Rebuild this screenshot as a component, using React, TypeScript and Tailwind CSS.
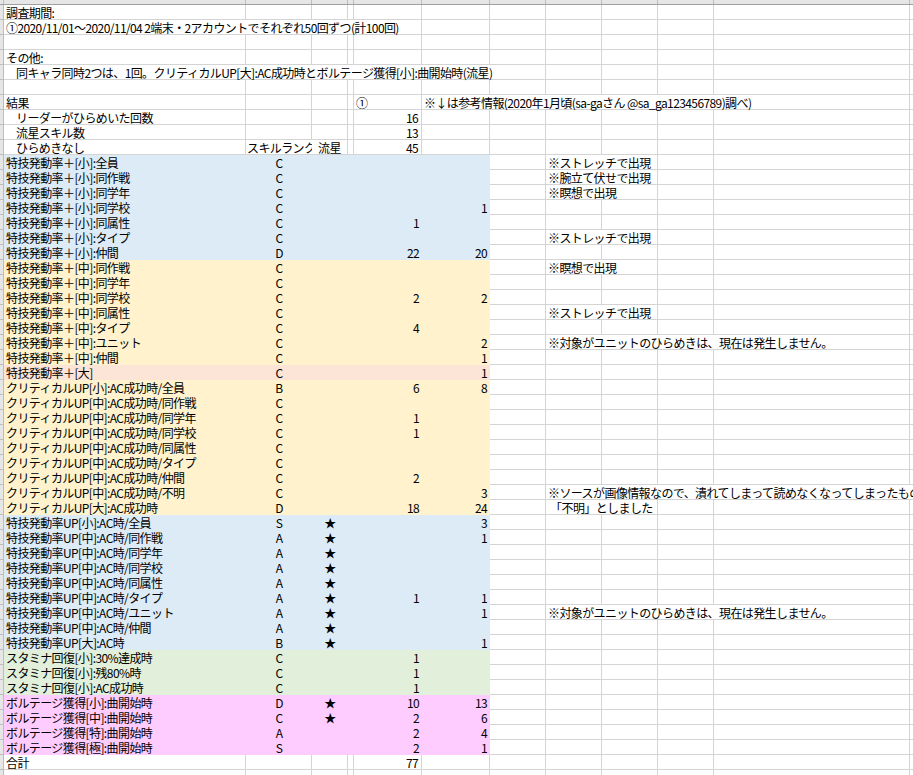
import React from "react";

const W = [4, 242, 66, 36, 6, 68, 68, 56, 56, 56, 56, 196, 9];
const BLUE = "bg-[#ddebf7]", OR = "bg-[#fff2cc]", RED = "bg-[#fce4d6]", GR = "bg-[#e2efda]", PK = "bg-[#ffccff]";

type R = { a?: string; ind?: boolean; b?: string; c?: string; e?: string; f?: string; fl?: boolean; h?: string; col?: string };

const U = "ひらめき";
const rows: R[] = [
  { a: "調査期間:" },
  { a: "①2020/11/01～2020/11/04 2端末・2アカウントでそれぞれ50回ずつ(計100回)" },
  {},
  { a: "その他:" },
  { a: "同キャラ同時2つは、1回。クリティカルUP[大]:AC成功時とボルテージ獲得[小]:曲開始時(流星)", ind: true },
  {},
  { a: "結果", e: "①", fl: true, f: "※↓は参考情報(2020年1月頃(sa-gaさん @sa_ga123456789)調べ)" },
  { a: "リーダーがひらめいた回数", ind: true, e: "16" },
  { a: "流星スキル数", ind: true, e: "13" },
  { a: U + "なし", ind: true, b: "スキルランク", c: "流星", e: "45" },
  { a: "特技発動率＋[小]:全員", b: "C", col: BLUE, h: "※ストレッチで出現" },
  { a: "特技発動率＋[小]:同作戦", b: "C", col: BLUE, h: "※腕立て伏せで出現" },
  { a: "特技発動率＋[小]:同学年", b: "C", col: BLUE, h: "※瞑想で出現" },
  { a: "特技発動率＋[小]:同学校", b: "C", col: BLUE, f: "1" },
  { a: "特技発動率＋[小]:同属性", b: "C", col: BLUE, e: "1" },
  { a: "特技発動率＋[小]:タイプ", b: "C", col: BLUE, h: "※ストレッチで出現" },
  { a: "特技発動率＋[小]:仲間", b: "D", col: BLUE, e: "22", f: "20" },
  { a: "特技発動率＋[中]:同作戦", b: "C", col: OR, h: "※瞑想で出現" },
  { a: "特技発動率＋[中]:同学年", b: "C", col: OR },
  { a: "特技発動率＋[中]:同学校", b: "C", col: OR, e: "2", f: "2" },
  { a: "特技発動率＋[中]:同属性", b: "C", col: OR, h: "※ストレッチで出現" },
  { a: "特技発動率＋[中]:タイプ", b: "C", col: OR, e: "4" },
  { a: "特技発動率＋[中]:ユニット", b: "C", col: OR, f: "2", h: "※対象がユニットの" + U + "は、現在は発生しません。" },
  { a: "特技発動率＋[中]:仲間", b: "C", col: OR, f: "1" },
  { a: "特技発動率＋[大]", b: "C", col: RED, f: "1" },
  { a: "クリティカルUP[小]:AC成功時/全員", b: "B", col: OR, e: "6", f: "8" },
  { a: "クリティカルUP[中]:AC成功時/同作戦", b: "C", col: OR },
  { a: "クリティカルUP[中]:AC成功時/同学年", b: "C", col: OR, e: "1" },
  { a: "クリティカルUP[中]:AC成功時/同学校", b: "C", col: OR, e: "1" },
  { a: "クリティカルUP[中]:AC成功時/同属性", b: "C", col: OR },
  { a: "クリティカルUP[中]:AC成功時/タイプ", b: "C", col: OR },
  { a: "クリティカルUP[中]:AC成功時/仲間", b: "C", col: OR, e: "2" },
  { a: "クリティカルUP[中]:AC成功時/不明", b: "C", col: OR, f: "3", h: "※ソースが画像情報なので、潰れてしまって読めなくなってしまったものを" },
  { a: "クリティカルUP[大]:AC成功時", b: "D", col: OR, e: "18", f: "24", h: "\u00a0「不明」としました" },
  { a: "特技発動率UP[小]:AC時/全員", b: "S", c: "★", col: BLUE, f: "3" },
  { a: "特技発動率UP[中]:AC時/同作戦", b: "A", c: "★", col: BLUE, f: "1" },
  { a: "特技発動率UP[中]:AC時/同学年", b: "A", c: "★", col: BLUE },
  { a: "特技発動率UP[中]:AC時/同学校", b: "A", c: "★", col: BLUE },
  { a: "特技発動率UP[中]:AC時/同属性", b: "A", c: "★", col: BLUE },
  { a: "特技発動率UP[中]:AC時/タイプ", b: "A", c: "★", col: BLUE, e: "1", f: "1" },
  { a: "特技発動率UP[中]:AC時/ユニット", b: "A", c: "★", col: BLUE, f: "1", h: "※対象がユニットの" + U + "は、現在は発生しません。" },
  { a: "特技発動率UP[中]:AC時/仲間", b: "A", c: "★", col: BLUE },
  { a: "特技発動率UP[大]:AC時", b: "B", c: "★", col: BLUE, f: "1" },
  { a: "スタミナ回復[小]:30%達成時", b: "C", col: GR, e: "1" },
  { a: "スタミナ回復[小]:残80%時", b: "C", col: GR, e: "1" },
  { a: "スタミナ回復[小]:AC成功時", b: "C", col: GR, e: "1" },
  { a: "ボルテージ獲得[小]:曲開始時", b: "D", c: "★", col: PK, e: "10", f: "13" },
  { a: "ボルテージ獲得[中]:曲開始時", b: "C", c: "★", col: PK, e: "2", f: "6" },
  { a: "ボルテージ獲得[特]:曲開始時", b: "A", col: PK, e: "2", f: "4" },
  { a: "ボルテージ獲得[極]:曲開始時", b: "S", col: PK, e: "2", f: "1" },
  { a: "合計", e: "77" },
  {},
];

function Row({ r }: { r: R }) {
  const colored = !!r.col;
  const cell = (i: number, content: React.ReactNode, cls = "") => (
    <div
      key={i}
      style={{ width: W[i] }}
      className={`relative shrink-0 h-[15px] ${colored && i >= 1 && i <= 6 ? r.col : "border-r border-b border-[#d4d4d4]"} ${cls}`}
    >
      {content}
    </div>
  );
  const over = (t?: string, pl = "pl-[2px]") =>
    t ? <span className={`absolute left-0 top-0 z-10 h-[14px] ${pl} pr-1 whitespace-nowrap bg-white leading-[15px]`}>{t}</span> : null;
  return (
    <div className="flex">
      <div style={{ width: W[0] }} className="shrink-0 h-[15px] bg-[#e6e6e6] border-r border-b border-[#bdbdbd]" />
      {cell(1, r.a ? (
        <span className={`absolute left-0 top-0 z-10 h-[14px] whitespace-nowrap leading-[15px] ${r.ind ? "pl-[12px]" : "pl-[2px]"} ${colored ? "" : "bg-white pr-1"}`}>{r.a}</span>
      ) : null)}
      {cell(2, r.b ? (r.b.length > 1 ? over(r.b, "pl-[1px]") : <div className="text-center leading-[15px]">{r.b}</div>) : null)}
      {cell(3, r.c ? (r.c === "★" ? <div className="text-center leading-[15px]">{r.c}</div> : over(r.c, "pl-[6px]")) : null)}
      {cell(4, null)}
      {cell(5, r.e ? (r.fl ? <div className="pl-[2px] leading-[15px]">{r.e}</div> : <div className="text-right pr-[3px] leading-[15px]">{r.e}</div>) : null)}
      {cell(6, r.f ? (r.fl ? over(r.f) : <div className="text-right pr-[3px] leading-[15px]">{r.f}</div>) : null)}
      {cell(7, null)}
      {cell(8, over(r.h))}
      {cell(9, null)}
      {cell(10, null)}
      {cell(11, null)}
      <div className="shrink-0 w-[9px] h-[15px] border-b border-[#d4d4d4]" />
    </div>
  );
}

export default function App() {
  return (
    <div className="w-[913px] h-[775px] overflow-hidden bg-white text-[12px] tracking-[-0.6px] text-black" style={{ fontFamily: '"Noto Sans CJK JP", "Noto Sans", sans-serif' }}>
      <div className="flex h-[5px] bg-[#e6e6e6] border-b border-[#a0a0a0]">
        {W.map((w, i) => (
          <div key={i} style={{ width: w }} className="shrink-0 border-r border-[#bdbdbd]" />
        ))}
      </div>
      {rows.map((r, i) => <Row key={i} r={r} />)}
    </div>
  );
}
